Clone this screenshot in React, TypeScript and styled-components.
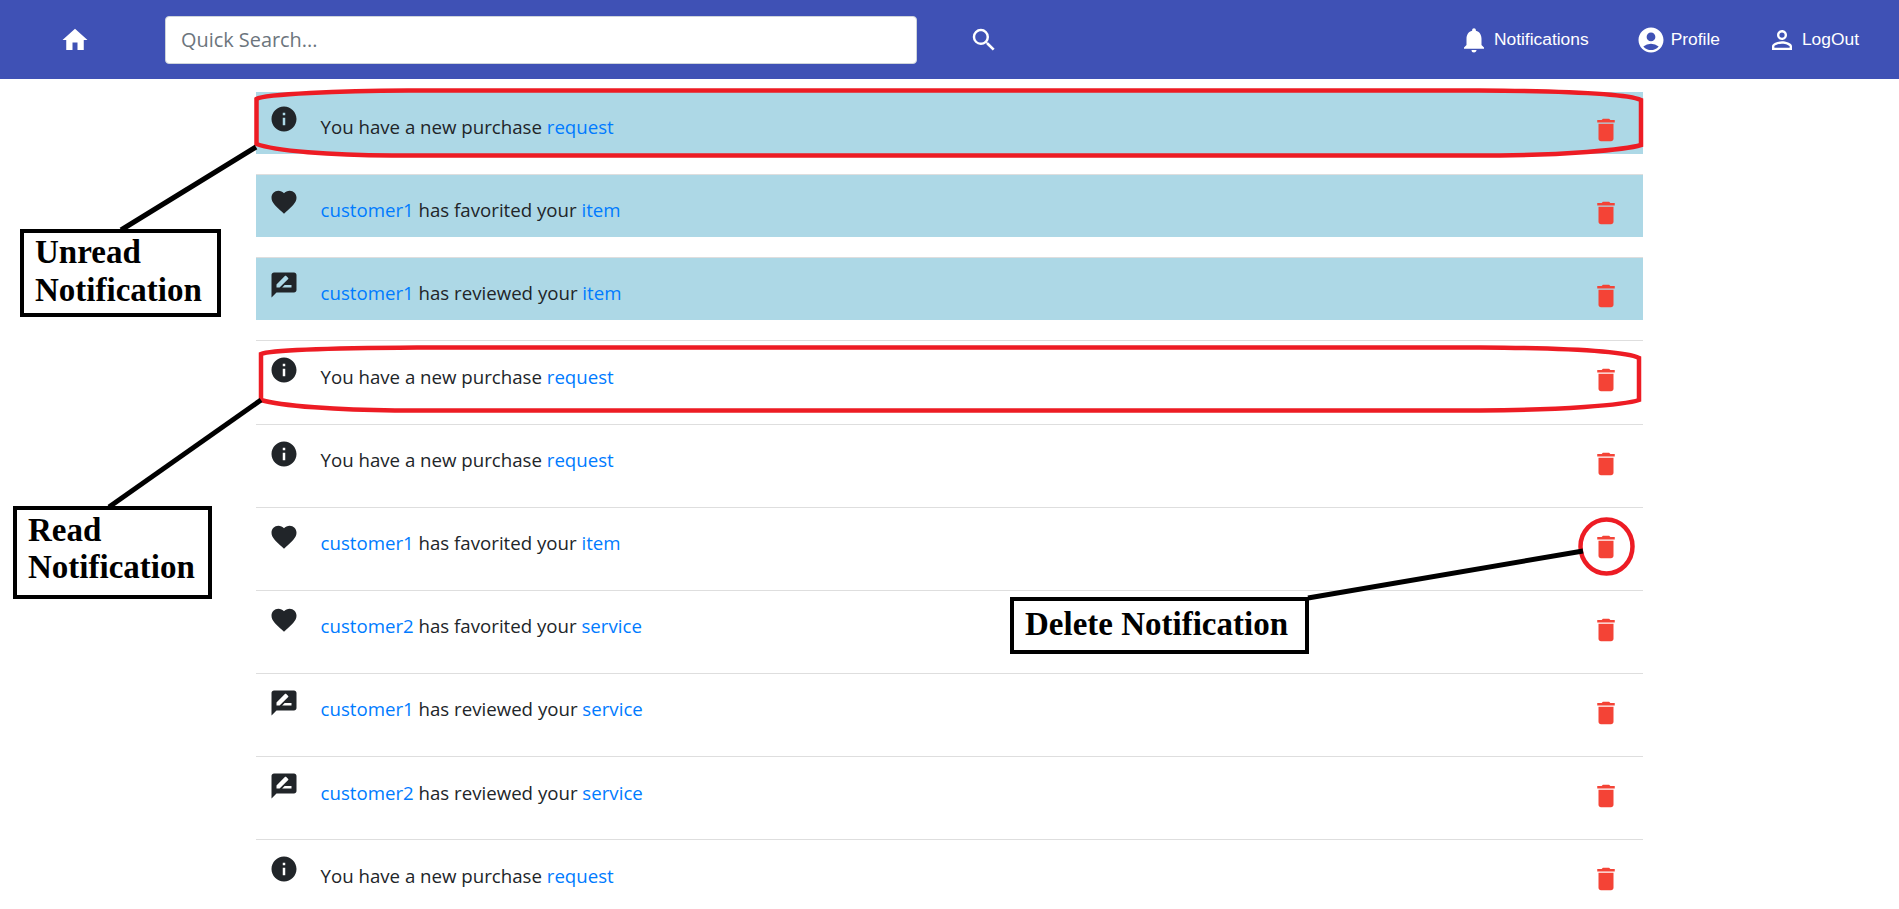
import styled, {createGlobalStyle} from 'styled-components';
import {MdAccountCircle, MdDelete, MdFavorite, MdHome, MdInfo, MdNotifications, MdPersonOutline, MdRateReview, MdSearch} from 'react-icons/md';

const GlobalStyle = createGlobalStyle`
    html, body {
        margin: 0;
        height: 100%;
        overflow: hidden;
        background: #fff;
    }
    * {
        box-sizing: border-box;
    }
`;

const Page = styled.div`
    position: relative;
    height: 909px;
    overflow: hidden;
    font-family: "Open Sans", sans-serif;
`;

const NavBar = styled.nav`
    display: flex;
    align-items: center;
    height: 79px;
    padding: 0 40px 0 60px;
    background-color: #3f51b5;
    color: #fff;
`;
const SearchInput = styled.input`
    width: 752px;
    height: 48px;
    margin-left: 75px;
    padding: 0 15px;
    border: 1px solid #ced4da;
    border-radius: 4px;
    background: #fff;
    font-family: "Open Sans", sans-serif;
    font-size: 19.9px;
    &::placeholder {
        color: #6c757d;
        opacity: 1;
    }
`;
const SearchButton = styled.span`
    display: flex;
    margin-left: 52px;
`;
const NavLinks = styled.div`
    display: flex;
    align-items: center;
    gap: 47px;
    margin-left: auto;
`;
const NavLink = styled.a`
    display: flex;
    align-items: center;
    gap: 5px;
    font-family: "Liberation Sans", sans-serif;
    font-size: 17.4px;
    color: #fff;
`;

const List = styled.ul`
    width: 1387px;
    margin: 13px auto 0;
    padding: 0;
    list-style: none;
`;
const Row = styled.li<{$unread?: boolean}>`
    display: flex;
    align-items: flex-start;
    height: 63.15px;
    margin-bottom: 20px;
    padding: ${props => props.$unread ? '12px' : '14px'} 22px 0 13px;
    border-top: 1px solid #dedede;
    background-color: ${props => props.$unread ? '#add8e6' : '#fff'};
    color: #212529;
    &:first-child {
        height: 62.15px;
        padding-top: 11px;
        border-top-color: transparent;
    }
`;
const Message = styled.div<{$unread?: boolean}>`
    flex: 1;
    margin: ${props => props.$unread ? '10.5px' : '9.5px'} 0 0 21.5px;
    font-size: 18.66px;
    line-height: 24px;
`;
const Accent = styled.span`
    color: #007bff;
`;
const DeleteButton = styled.span<{$unread?: boolean}>`
    display: flex;
    margin-top: ${props => props.$unread ? '10.5px' : '10px'};
    color: #f44336;
`;

const Callout = styled.div<{$left: number; $top: number; $width: number; $height: number; $inset: number}>`
    position: absolute;
    left: ${props => props.$left}px;
    top: ${props => props.$top}px;
    width: ${props => props.$width}px;
    height: ${props => props.$height}px;
    padding: ${props => props.$inset}px 0 0 11px;
    border: 4px solid #000;
    background: #fff;
    color: #000;
    font-family: "Liberation Serif", serif;
    font-size: 33px;
    font-weight: 700;
    line-height: 37.5px;
`;
const Marks = styled.svg`
    position: absolute;
    left: 0;
    top: 0;
    pointer-events: none;
`;

type Kind = 'purchase' | 'favorite' | 'review';

interface Notification {
    kind: Kind;
    customer?: string;
    target?: string;
    unread?: boolean;
}

const notifications: Notification[] = [
    {kind: 'purchase', unread: true},
    {kind: 'favorite', customer: 'customer1', target: 'item', unread: true},
    {kind: 'review', customer: 'customer1', target: 'item', unread: true},
    {kind: 'purchase'},
    {kind: 'purchase'},
    {kind: 'favorite', customer: 'customer1', target: 'item'},
    {kind: 'favorite', customer: 'customer2', target: 'service'},
    {kind: 'review', customer: 'customer1', target: 'service'},
    {kind: 'review', customer: 'customer2', target: 'service'},
    {kind: 'purchase'},
];

function KindIcon({kind}: {kind: Kind}) {
    if (kind === 'favorite') return <MdFavorite size={30} />;
    if (kind === 'review') return <MdRateReview size={30} />;
    return <MdInfo size={30} />;
}

function App() {
    return (
        <Page>
            <GlobalStyle />
            <NavBar>
                <MdHome size={30} />
                <SearchInput placeholder="Quick Search..." />
                <SearchButton><MdSearch size={30} /></SearchButton>
                <NavLinks>
                    <NavLink><MdNotifications size={30} />Notifications</NavLink>
                    <NavLink><MdAccountCircle size={30} />Profile</NavLink>
                    <NavLink><MdPersonOutline size={30} />LogOut</NavLink>
                </NavLinks>
            </NavBar>
            <List>
                {notifications.map((item, index) => (
                    <Row key={index} $unread={item.unread}>
                        <KindIcon kind={item.kind} />
                        <Message $unread={item.unread}>
                            {item.kind === 'purchase' ? (
                                <>You have a new purchase <Accent>request</Accent></>
                            ) : (
                                <>
                                    <Accent>{item.customer}</Accent>
                                    {item.kind === 'favorite' ? ' has favorited your ' : ' has reviewed your '}
                                    <Accent>{item.target}</Accent>
                                </>
                            )}
                        </Message>
                        <DeleteButton $unread={item.unread}><MdDelete size={30} /></DeleteButton>
                    </Row>
                ))}
            </List>
            <Marks width={1899} height={909} fill="none">
                <g stroke="#ed1c24" strokeWidth={4.5}>
                    <path d="M408 90.5H1479C1560 91 1625 93 1641 100V145C1625 150 1560 155 1500 155.5H392C330 155 275 151 256.5 144V99C265 94 340 91 408 90.5Z" />
                    <path d="M417 347.5H1480C1560 348 1625 351 1639 358V400C1625 405 1560 410 1480 410.5H395C340 410 280 406 261 400V354C270 350 340 348 417 347.5Z" />
                    <ellipse cx={1606.5} cy={546.5} rx={26} ry={27} />
                </g>
                <g stroke="#000" strokeWidth={5}>
                    <path d="M256 147L121 230" />
                    <path d="M261 400L109 507" />
                    <path d="M1308 598L1583 551" />
                </g>
            </Marks>
            <Callout $left={20} $top={229} $width={201} $height={88} $inset={1}>Unread<br />Notification</Callout>
            <Callout $left={13} $top={506} $width={199} $height={93} $inset={1.5}>Read<br />Notification</Callout>
            <Callout $left={1010} $top={597} $width={299} $height={57} $inset={5}>Delete Notification</Callout>
        </Page>
    );
}

export default App;
